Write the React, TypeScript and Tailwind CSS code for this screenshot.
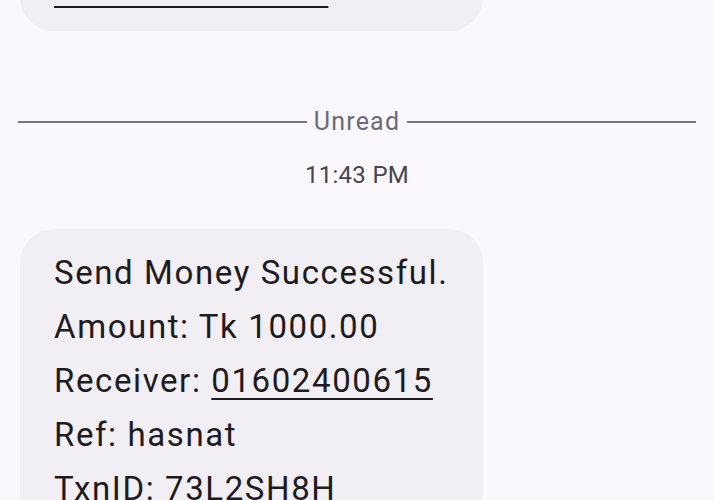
import React from "react";

const body = { fontFamily: "Roboto, 'Liberation Sans', sans-serif" };
const meta = { fontFamily: "Roboto, 'Liberation Sans', sans-serif" };

export default function App() {
  return (
    <div className="w-[714px] h-[500px] overflow-hidden bg-[#fbf8fd] flex flex-col">
      {/* previous bubble, mostly scrolled off */}
      <div
        className="ml-[20px] w-[463px] mt-[-100px] h-[131px] rounded-[34px] bg-[#f1eef4] flex flex-col justify-end px-[34px] pb-[15px] shrink-0"
        style={body}
      >
        <div className="text-[33px] leading-[54px] tracking-[1.6px] text-[#1d1b20]">
          <span className="underline decoration-2 underline-offset-[6px]">
            www.bkash.com.
          </span>
        </div>
      </div>

      {/* unread divider */}
      <div className="mt-[76px] flex items-center px-[18px] gap-[7px] h-[30px] shrink-0" style={meta}>
        <div className="flex-1 h-[2px] bg-[#77767e]" />
        <span className="text-[25px] leading-[30px] tracking-[1.2px] text-[#6b6a78]">Unread</span>
        <div className="flex-1 h-[2px] bg-[#77767e]" />
      </div>

      {/* timestamp */}
      <div
        className="mt-[23px] text-center text-[24px] leading-[30px] tracking-[0.3px] text-[#46464e] shrink-0"
        style={meta}
      >
        11:43 PM
      </div>

      {/* message bubble */}
      <div
        className="ml-[20px] w-[463px] mt-[39px] rounded-[34px] bg-[#f1eef4] px-[34px] pt-[17px] pb-[15px] shrink-0 text-[33px] leading-[54px] tracking-[1.6px] text-[#1d1b20]"
        style={body}
      >
        <div>Send Money Successful.</div>
        <div>Amount: Tk 1000.00</div>
        <div>
          Receiver:{" "}
          <span className="underline decoration-2 underline-offset-[6px]">
            01602400615
          </span>
        </div>
        <div>Ref: hasnat</div>
        <div>TxnID: 73L2SH8H</div>
      </div>
    </div>
  );
}
